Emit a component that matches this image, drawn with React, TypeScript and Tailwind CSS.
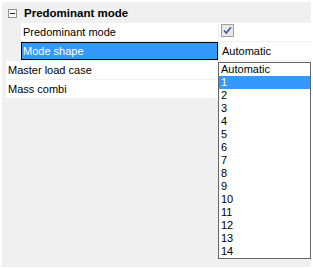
import React from "react";

const items = ["Automatic", "1", "2", "3", "4", "5", "6", "7", "8", "9", "10", "11", "12", "13", "14"];

function MinusBox() {
  return (
    <div className="w-[9px] h-[9px] border border-[#919191] bg-white flex items-center justify-center">
      <div className="w-[5px] h-px bg-[#222]" />
    </div>
  );
}

function CheckBox() {
  return (
    <div className="w-[13px] h-[13px] border border-[#a0a0a0] bg-[#e8e8e8] flex items-center justify-center">
      <svg width="9" height="9" viewBox="0 0 9 9">
        <path d="M1 4.5 L3.3 7 L8 1.2" fill="none" stroke="#40599a" strokeWidth="1.6" />
      </svg>
    </div>
  );
}

export default function App() {
  return (
    <div
      className="w-[313px] h-[269px] bg-white p-[2px] text-[11px] leading-none text-black"
      style={{ fontFamily: '"Liberation Sans", Arial, sans-serif' }}
    >
      <div className="relative w-[309px] h-[265px] bg-[#f0f0f0] flex flex-col gap-px">
        {/* category header */}
        <div className="h-[20px] flex items-center pt-[3px]">
          <div className="pl-[6px]">
            <MinusBox />
          </div>
          <span className="ml-[7px] font-bold text-[11.5px]">Predominant mode</span>
        </div>

        {/* nested rows */}
        <div className="h-[18px] flex pl-[19px]">
          <div className="w-[197px] bg-white flex items-center pl-[2px]">Predominant mode</div>
          <div className="w-px" />
          <div className="flex-1 bg-white flex items-start pl-[2px] pt-px">
            <CheckBox />
          </div>
        </div>
        <div className="h-[18px] flex pl-[19px]">
          <div className="w-[197px] bg-[#3399ff] border border-black text-white flex items-center pl-px">
            Mode shape
          </div>
          <div className="w-px" />
          <div className="flex-1 bg-white flex items-center pl-[3px]">Automatic</div>
        </div>

        {/* top-level rows */}
        <div className="h-[18px] flex pl-[4px]">
          <div className="w-[212px] bg-white flex items-center pl-[2px]">Master load case</div>
          <div className="w-px" />
          <div className="flex-1 bg-white" />
        </div>
        <div className="h-[18px] flex pl-[4px]">
          <div className="w-[212px] bg-white flex items-center pl-[2px]">Mass combi</div>
          <div className="w-px" />
          <div className="flex-1 bg-white" />
        </div>

        {/* dropdown list */}
        <div className="absolute left-[216px] top-[60px] w-[93px] h-[197px] bg-white border border-[#646464] flex flex-col">
          {items.map((it) => (
            <div
              key={it}
              className={
                it === "1"
                  ? "h-[13px] flex items-center pl-[2px] bg-[#3399ff] text-white"
                  : "h-[13px] flex items-center pl-[2px]"
              }
            >
              {it}
            </div>
          ))}
        </div>
      </div>
    </div>
  );
}
